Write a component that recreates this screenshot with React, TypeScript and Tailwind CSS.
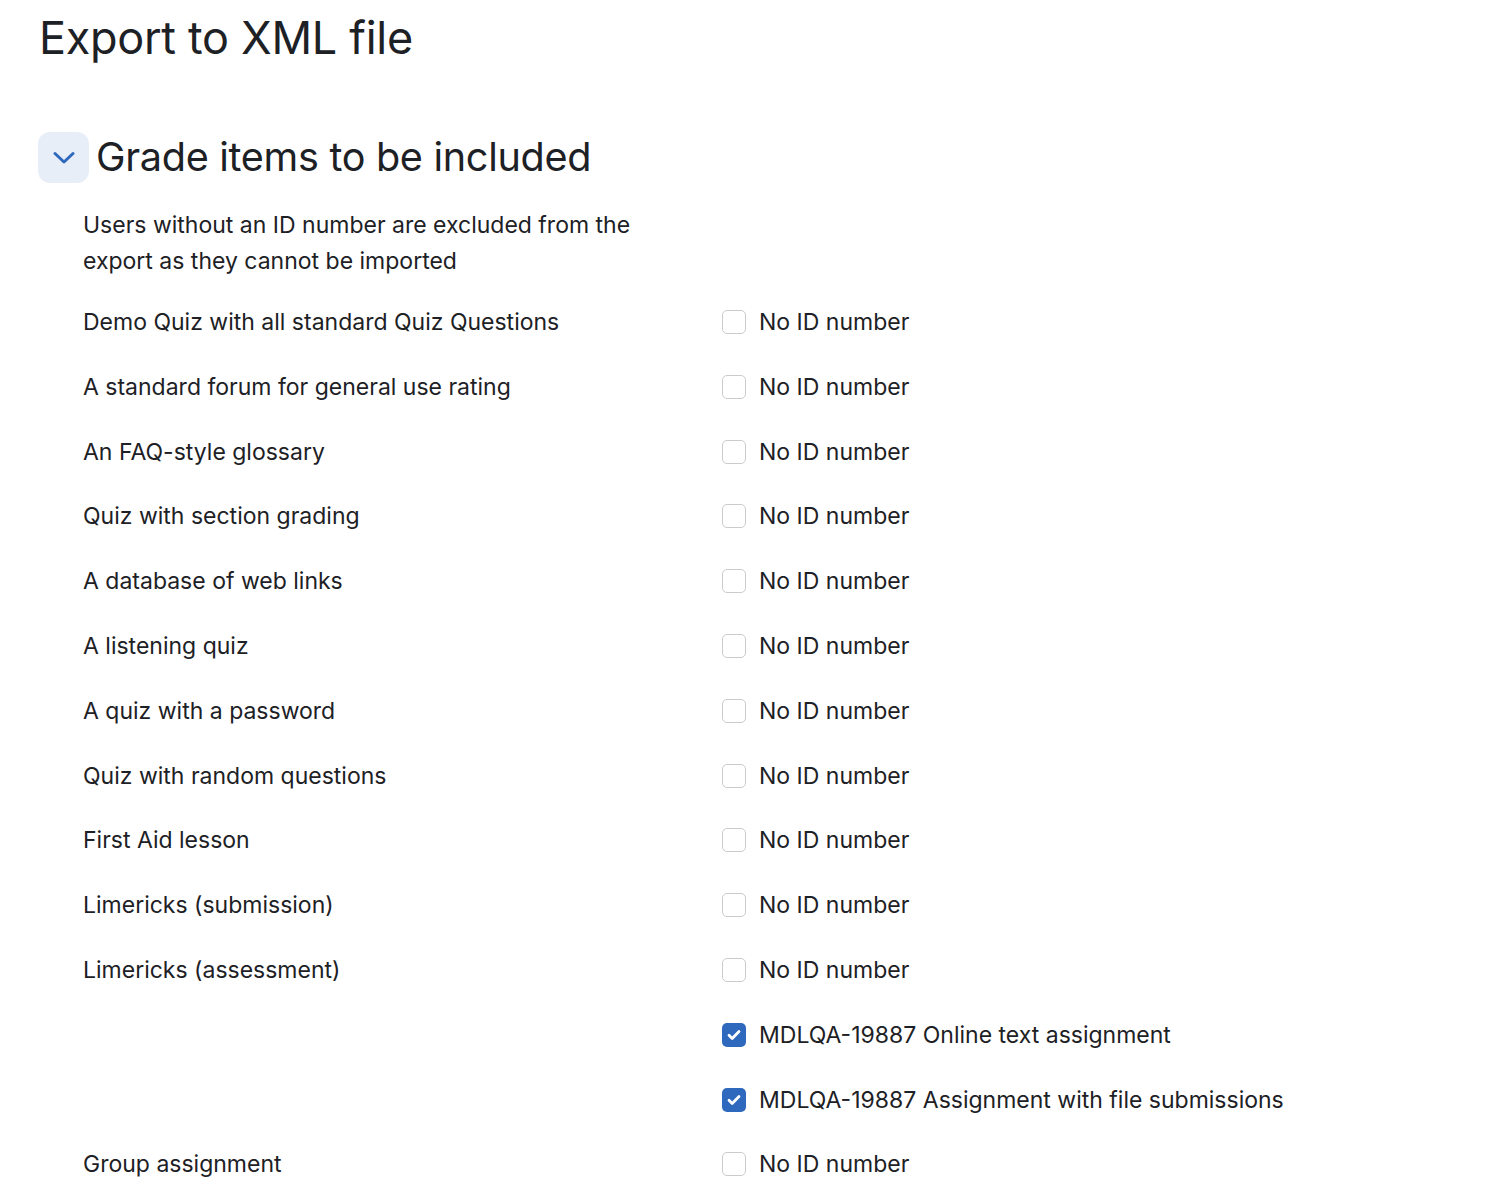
const items: { label: string; name: string; checked?: boolean }[] = [
  { label: "Demo Quiz with all standard Quiz Questions", name: "No ID number" },
  { label: "A standard forum for general use rating", name: "No ID number" },
  { label: "An FAQ-style glossary", name: "No ID number" },
  { label: "Quiz with section grading", name: "No ID number" },
  { label: "A database of web links", name: "No ID number" },
  { label: "A listening quiz", name: "No ID number" },
  { label: "A quiz with a password", name: "No ID number" },
  { label: "Quiz with random questions", name: "No ID number" },
  { label: "First Aid lesson", name: "No ID number" },
  { label: "Limericks (submission)", name: "No ID number" },
  { label: "Limericks (assessment)", name: "No ID number" },
  { label: "", name: "MDLQA-19887 Online text assignment", checked: true },
  { label: "", name: "MDLQA-19887 Assignment with file submissions", checked: true },
  { label: "Group assignment", name: "No ID number" },
];

function Checkbox({ checked }: { checked?: boolean }) {
  if (checked) {
    return (
      <span className="w-6 h-6 rounded-[5px] bg-[#2e69bd] flex items-center justify-center shrink-0">
        <svg width="14" height="12" viewBox="0 0 14 12" fill="none">
          <path d="M2 6.3l3.2 3.2L12 2.6" stroke="white" strokeWidth="2.8" strokeLinecap="round" strokeLinejoin="round" />
        </svg>
      </span>
    );
  }
  return <span className="w-6 h-6 rounded-[5px] border border-[#c9cccf] bg-white shrink-0" />;
}

export default function App() {
  return (
    <div
      className="min-h-screen bg-white text-[#1d2125] pl-[39px] pt-[10px]"
      style={{ fontFamily: "Inter, 'Noto Sans', sans-serif" }}
    >
      <h1 className="text-[45px] leading-[56px] tracking-[-0.3px]">Export to XML file</h1>

      {/* Section */}
      <div className="mt-[65px] flex items-center gap-[7px]">
        <button className="w-[51px] h-[51px] rounded-[12px] bg-[#e8eef8] flex items-center justify-center -ml-px">
          <svg width="22" height="13" viewBox="0 0 22 13" fill="none">
            <path d="M2 2.5l9 8.5 9-8.5" stroke="#2e69bd" strokeWidth="3" strokeLinecap="round" strokeLinejoin="round" />
          </svg>
        </button>
        <h2 className="text-[39.6px] leading-[52px] tracking-[-0.3px]">Grade items to be included</h2>
      </div>

      <div className="pl-[44px] mt-[24px] text-[23px]">
        <p className="w-[570px] leading-[36px]">
          Users without an ID number are excluded from the export as they cannot be imported
        </p>

        <div className="mt-[25px] flex flex-col">
          {items.map((it, i) => (
            <div key={i} className="h-[64.8px] flex items-start">
              <div className="w-[639px] leading-[36px]">{it.label}</div>
              <div className="flex items-center gap-[13px] h-[36px]">
                <Checkbox checked={it.checked} />
                <span className="leading-[36px]">{it.name}</span>
              </div>
            </div>
          ))}
        </div>
      </div>
    </div>
  );
}
